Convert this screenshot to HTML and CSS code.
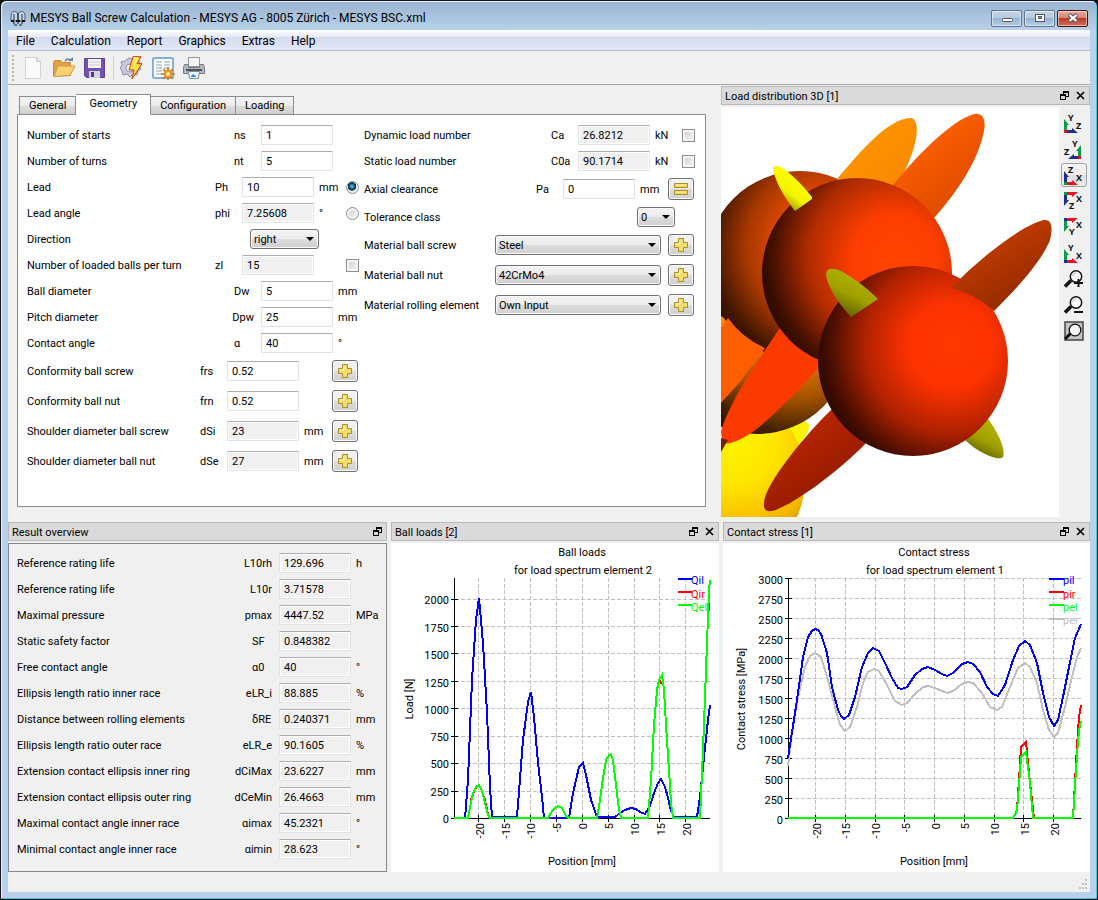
FILE: index.html
```html
<!DOCTYPE html>
<html lang="en">
<head>
    <meta charset="UTF-8">
    <meta name="viewport" content="width=device-width, initial-scale=1.0">
    <title>MESYS Ball Screw Calculation</title>
    <link rel="stylesheet" href="styles.css">
</head>
<body>

<svg class="defs" aria-hidden="true">
    <symbol id="plus" viewBox="0 0 16 16">
        <path d="M5.500 1.500h5v4h4v5h-4v4h-5v-4h-4v-5h4z" fill="#f3dc6c" stroke="#a98f25"/>
        <path d="M7 3v4H3" fill="none" stroke="#fff6bd"/>
    </symbol>
    <symbol id="equals" viewBox="0 0 16 16">
        <path d="M1.500 2.500h13v4h-13zM1.500 9.500h13v4h-13z" fill="#efd75f" stroke="#a98f25"/>
        <path d="M3 4h10M3 11h10" stroke="#fff2a5"/>
    </symbol>
    <symbol id="float" viewBox="0 0 9 9">
        <path d="M3 0h6v6H6v3H0V3h3zM4 2v1h2v2h2V2zM1 5v3h4V5z" fill="#000" fill-rule="evenodd"/>
    </symbol>
    <symbol id="cross" viewBox="0 0 9 9">
        <path d="M1 1l7 7M8 1L1 8" stroke="#000" stroke-width="1.600"/>
    </symbol>
    <symbol id="lens" viewBox="0 0 20 18">
        <path d="M1 16.500L7 10.500" stroke="#111" stroke-width="3.500"/>
        <circle cx="12" cy="6.500" r="5.700" fill="#f8f8f8" stroke="#111" stroke-width="1.500"/>
        <path d="M8.500 6a3.600 3.600 0 0 1 3.500-3" stroke="#bbb" fill="none"/>
    </symbol>
</svg>

<div class="window">
    <header class="titlebar">
        <svg class="app-icon" width="16" height="16" viewBox="0 0 16 16">
            <path d="M1 6a3.500 4.500 0 0 1 7 0v5H1zM8 6a3.500 4.500 0 0 1 7 0v5H8z" fill="#c7d5e6" stroke="#4c6078"/>
            <path d="M4 4v7M12 4v7M8 3v9" stroke="#22344c"/>
            <path d="M1 11h3M6 11h4M12 11h3" stroke="#111" stroke-width="2"/>
            <path d="M3 13h2M7 13h2M11 13h2M4 15h3M9 15h3" stroke="#555" stroke-width="1.500"/>
        </svg>
        <h1>MESYS Ball Screw Calculation - MESYS AG - 8005 Zürich - MESYS BSC.xml</h1>
        <div class="window-buttons">
            <button type="button" aria-label="Minimize">
                <svg width="12" height="12" viewBox="0 0 12 12"><rect x="1.500" y="6.500" width="10" height="3" rx="1" fill="#fff" stroke="#535666"/></svg>
            </button>
            <button type="button" aria-label="Maximize">
                <svg width="12" height="12" viewBox="0 0 12 12"><rect x="1.500" y="2.500" width="9" height="7" fill="#fff" stroke="#535666"/><rect x="4.500" y="4.500" width="3" height="2" fill="#8fb0cf" stroke="#535666"/></svg>
            </button>
            <button type="button" class="close" aria-label="Close">
                <svg width="12" height="12" viewBox="0 0 12 12"><path d="M2 2.500l8 7M10 2.500l-8 7" stroke="#535666" stroke-width="4"/><path d="M2.500 3l7 6M9.500 3l-7 6" stroke="#fff" stroke-width="2.200"/></svg>
            </button>
        </div>
    </header>

    <nav class="menubar">
        <a href="#">File</a>
        <a href="#">Calculation</a>
        <a href="#">Report</a>
        <a href="#">Graphics</a>
        <a href="#">Extras</a>
        <a href="#">Help</a>
    </nav>

    <div class="toolbar">
        <span class="handle"></span>
        <button type="button" aria-label="New">
            <svg width="24" height="24" viewBox="0 0 24 24"><path d="M4.500 1.500h11l4 4v17h-15z" fill="#fafafa" stroke="#d3d3d3"/><path d="M15.500 1.500v4h4" fill="#e8e8e8" stroke="#ccc"/></svg>
        </button>
        <button type="button" aria-label="Open">
            <svg width="24" height="24" viewBox="0 0 24 24">
                <path d="M1.500 20V6.500l1-2h6l2 2h8v13z" fill="#dda545" stroke="#c48a34"/>
                <path d="M2 20.500L6 10h17l-5 9.500z" fill="#f8cf72" stroke="#d79c3b"/>
                <path d="M13 5q3-4 6 0" fill="none" stroke="#6d8296" stroke-width="1.500"/><path d="M16 5h5V1z" fill="#6d8296"/>
            </svg>
        </button>
        <button type="button" aria-label="Save">
            <svg width="24" height="24" viewBox="0 0 24 24">
                <path d="M1.500 2.500h20v19h-18l-2-2z" fill="#7152ae" stroke="#5f429d"/>
                <path d="M5 3h13v9H5z" fill="#f2f2f4"/><path d="M6 6h11M6 9h11" stroke="#cacad2"/>
                <path d="M6 15h11v7H6z" fill="#d6d2e2"/><path d="M8 16h3v5H8z" fill="#54398c"/>
            </svg>
        </button>
        <span class="separator"></span>
        <button type="button" aria-label="Calculate">
            <svg width="24" height="24" viewBox="0 0 24 24">
                <path d="M9 2l3 1 3-1 2 3 3 1-1 4 2 3-3 2-1 4-4-1-3 3-3-3-4 1-1-4-2-3 2-3-1-3 4-1z" fill="#c9c9dc" stroke="#8c8ca8"/>
                <circle cx="10" cy="12" r="4" fill="#f2f2f6" stroke="#9292ac"/>
                <path d="M13 .700h8l-4 7h5L12 23l2-9H9z" fill="#ffdf3d" stroke="#c03a14"/>
                <path d="M14 2h4l-4 7" fill="none" stroke="#fff6b0"/>
            </svg>
        </button>
        <button type="button" aria-label="Report">
            <svg width="24" height="24" viewBox="0 0 24 24">
                <rect x="2" y="2" width="20" height="20" rx="1" fill="#fff" stroke="#5b9bd3" stroke-width="1.500"/>
                <path d="M5 6h6M5 9h6M5 12h6M5 15h6M5 18h6M13 6h6M13 9h6M13 12h6" stroke="#b4c0ca" stroke-width="1.500"/>
                <path d="M17 11l1 4 4-2-2 4 4 1-4 1 2 4-4-2-1 3-1-3-4 2 2-4-4-1 4-1-2-4 4 2z" fill="#f59c1f" stroke="#c66a12" stroke-width=".7"/>
                <circle cx="17" cy="18" r="2" fill="#ffe9a0"/>
            </svg>
        </button>
        <button type="button" aria-label="Print">
            <svg width="24" height="24" viewBox="0 0 24 24">
                <path d="M6.500 1.500h11v9h-11z" fill="#f4f4f4" stroke="#8f979e"/>
                <path d="M2.500 8.500h4v3h11v-3h4l1 3v6h-21v-6z" fill="#b2b8bd" stroke="#747b81"/>
                <path d="M4 14h16" stroke="#4c5257" stroke-width="2"/>
                <path d="M6.500 15.500h11l-1 7h-9z" fill="#eaf4fc" stroke="#7c8fa0"/>
                <path d="M9 20l2-2 3 2v1H9z" fill="#3f8fd6"/>
            </svg>
        </button>
    </div>

    <main class="workspace">
        <section class="top-row">
            <div class="editor">
                <div class="tabs" role="tablist">
                    <button type="button" role="tab">General</button>
                    <button type="button" role="tab" class="active" aria-selected="true">Geometry</button>
                    <button type="button" role="tab">Configuration</button>
                    <button type="button" role="tab">Loading</button>
                </div>
                <form class="panel">
                    <div class="column">
                        <div class="row"><label for="ns">Number of starts</label><span class="symbol">ns</span><input type="text" id="ns" value="1"><span class="unit"></span></div>
                        <div class="row"><label for="nt">Number of turns</label><span class="symbol">nt</span><input type="text" id="nt" value="5"><span class="unit"></span></div>
                        <div class="row"><label for="ph">Lead</label><span class="symbol">Ph</span><input type="text" id="ph" value="10"><span class="unit">mm</span><span class="tail"><input type="radio" name="clearance" id="axial" checked></span></div>
                        <div class="row"><label for="phi">Lead angle</label><span class="symbol">phi</span><input type="text" id="phi" value="7.25608" readonly><span class="unit">°</span><span class="tail"><input type="radio" name="clearance" id="tolerance"></span></div>
                        <div class="row direction"><label for="direction">Direction</label><span class="select"><select id="direction"><option>right</option><option>left</option></select></span></div>
                        <div class="row"><label for="zl">Number of loaded balls per turn</label><span class="symbol">zl</span><input type="text" id="zl" value="15" readonly><span class="unit"></span><span class="tail"><input type="checkbox" aria-label="Override number of loaded balls"></span></div>
                        <div class="row"><label for="dw">Ball diameter</label><span class="symbol">Dw</span><input type="text" id="dw" value="5"><span class="unit">mm</span></div>
                        <div class="row"><label for="dpw">Pitch diameter</label><span class="symbol">Dpw</span><input type="text" id="dpw" value="25"><span class="unit">mm</span></div>
                        <div class="row"><label for="alpha">Contact angle</label><span class="symbol">α</span><input type="text" id="alpha" value="40"><span class="unit">°</span></div>
                        <div class="row tall"><label for="frs">Conformity ball screw</label><span class="symbol">frs</span><input type="text" id="frs" value="0.52"><span class="unit"></span><button type="button" class="tool" aria-label="Edit"><svg width="16" height="16"><use href="#plus"/></svg></button></div>
                        <div class="row tall"><label for="frn">Conformity ball nut</label><span class="symbol">frn</span><input type="text" id="frn" value="0.52"><span class="unit"></span><button type="button" class="tool" aria-label="Edit"><svg width="16" height="16"><use href="#plus"/></svg></button></div>
                        <div class="row tall"><label for="dsi">Shoulder diameter ball screw</label><span class="symbol">dSi</span><input type="text" id="dsi" value="23" readonly><span class="unit">mm</span><button type="button" class="tool" aria-label="Edit"><svg width="16" height="16"><use href="#plus"/></svg></button></div>
                        <div class="row tall"><label for="dse">Shoulder diameter ball nut</label><span class="symbol">dSe</span><input type="text" id="dse" value="27" readonly><span class="unit">mm</span><button type="button" class="tool" aria-label="Edit"><svg width="16" height="16"><use href="#plus"/></svg></button></div>
                    </div>
                    <div class="column">
                        <div class="row"><label for="ca">Dynamic load number</label><span class="symbol">Ca</span><input type="text" id="ca" value="26.8212" readonly><span class="unit">kN</span><span class="tail"><input type="checkbox" aria-label="Override dynamic load number"></span></div>
                        <div class="row"><label for="c0a">Static load number</label><span class="symbol">C0a</span><input type="text" id="c0a" value="90.1714" readonly><span class="unit">kN</span><span class="tail"><input type="checkbox" aria-label="Override static load number"></span></div>
                        <div class="row tall"><label for="axial">Axial clearance</label><span class="symbol">Pa</span><input type="text" id="pa" value="0" aria-label="Pa"><span class="unit">mm</span><button type="button" class="tool" aria-label="Calculate clearance"><svg width="16" height="16"><use href="#equals"/></svg></button></div>
                        <div class="row class-row"><label for="tolerance">Tolerance class</label><span class="select"><select id="class" aria-label="Tolerance class"><option>0</option><option>1</option></select></span></div>
                        <div class="row tall material"><label for="mat-screw">Material ball screw</label><span class="select"><select id="mat-screw"><option>Steel</option></select></span><button type="button" class="tool" aria-label="Edit"><svg width="16" height="16"><use href="#plus"/></svg></button></div>
                        <div class="row tall material"><label for="mat-nut">Material ball nut</label><span class="select"><select id="mat-nut"><option>42CrMo4</option></select></span><button type="button" class="tool" aria-label="Edit"><svg width="16" height="16"><use href="#plus"/></svg></button></div>
                        <div class="row tall material"><label for="mat-ball">Material rolling element</label><span class="select"><select id="mat-ball"><option>Own Input</option></select></span><button type="button" class="tool" aria-label="Edit"><svg width="16" height="16"><use href="#plus"/></svg></button></div>
                    </div>
                </form>
            </div>

            <div class="dock">
                <div class="dock-title">
                    <h2>Load distribution 3D [1]</h2>
                    <button type="button" aria-label="Float"><svg width="9" height="9"><use href="#float"/></svg></button>
                    <button type="button" aria-label="Close"><svg width="9" height="9"><use href="#cross"/></svg></button>
                </div>
                <div class="view3d">
                    <svg class="scene" viewBox="721 107 338 410">
                        <defs>
                            <radialGradient id="ball-front" cx=".7" cy=".42" r=".76">
                                <stop offset="0" stop-color="#ff3800"/><stop offset=".3" stop-color="#fc3200"/><stop offset=".6" stop-color="#b02200"/><stop offset=".84" stop-color="#480e00"/><stop offset=".92" stop-color="#300900"/>
                            </radialGradient>
                            <radialGradient id="ball-mid" cx=".7" cy=".42" r=".76">
                                <stop offset="0" stop-color="#ff4400"/><stop offset=".3" stop-color="#fc3e00"/><stop offset=".6" stop-color="#b02c00"/><stop offset=".84" stop-color="#481100"/><stop offset=".92" stop-color="#300b00"/>
                            </radialGradient>
                            <radialGradient id="ball-back" cx=".66" cy=".4" r=".74">
                                <stop offset="0" stop-color="#ff5800"/><stop offset=".3" stop-color="#f45000"/><stop offset=".6" stop-color="#a83800"/><stop offset=".85" stop-color="#401600"/><stop offset="1" stop-color="#2c0e00"/>
                            </radialGradient>
                            <radialGradient id="ball-low" cx=".7" cy=".4" r=".7">
                                <stop offset="0" stop-color="#ff8800"/><stop offset=".35" stop-color="#e07400"/><stop offset=".6" stop-color="#a05000"/><stop offset=".85" stop-color="#402000"/><stop offset="1" stop-color="#2a1400"/>
                            </radialGradient>
                            <radialGradient id="ball-yellow" cx=".62" cy=".3" r=".78">
                                <stop offset="0" stop-color="#fff400"/><stop offset=".3" stop-color="#ffe400"/><stop offset=".6" stop-color="#f6b800"/><stop offset=".85" stop-color="#a87800"/><stop offset="1" stop-color="#604400"/>
                            </radialGradient>
                            <linearGradient id="spike-orange" x1="0" y1="0" x2="1" y2="1"><stop offset="0" stop-color="#ff9a00"/><stop offset="1" stop-color="#f88600"/></linearGradient>
                            <linearGradient id="spike-top" x1=".3" y1=".2" x2=".7" y2=".8"><stop offset="0" stop-color="#ff6000"/><stop offset="1" stop-color="#e04c00"/></linearGradient>
                            <linearGradient id="spike-right" x1=".3" y1=".2" x2=".7" y2=".8"><stop offset="0" stop-color="#c43c00"/><stop offset="1" stop-color="#982c00"/></linearGradient>
                            <linearGradient id="spike-low" x1=".3" y1=".2" x2=".7" y2=".8"><stop offset="0" stop-color="#b82600"/><stop offset="1" stop-color="#941a00"/></linearGradient>
                            <linearGradient id="spike-olive" x1=".6" y1="0" x2=".2" y2=".8"><stop offset="0" stop-color="#b4b400"/><stop offset=".6" stop-color="#a0a000"/><stop offset="1" stop-color="#6c6c00"/></linearGradient>
                            <linearGradient id="spike-yellow" x1=".7" y1="0" x2=".2" y2=".8"><stop offset="0" stop-color="#ffff00"/><stop offset=".7" stop-color="#f4f400"/><stop offset="1" stop-color="#a0a000"/></linearGradient>
                        </defs>
                        <rect x="721" y="107" width="338" height="410" fill="#fff"/>
                        <path d="M785 428C794 421 806 419 809 425C810 431 804 438 798 446z" fill="#f8f400"/>
                        <circle cx="711" cy="479" r="94" fill="url(#ball-yellow)"/>
                        <circle cx="757" cy="340" r="94" fill="url(#ball-low)"/>
                        <circle cx="800" cy="265" r="94" fill="url(#ball-back)"/>
                        <path d="M721 316l3 2 4 6-7 8z" fill="#ff8a00"/>
                        <path d="M728 318Q742 338 765 348L740 382 721 403V328z" fill="#ff5e00"/>
                        <path d="M837 179C862 149 890 117 912 118C922 123 916 152 898 184L890 192z" fill="url(#spike-orange)"/>
                        <path d="M893 185C915 158 950 121 974 114C984 112 986 122 984 131C978 163 953 197 934 218z" fill="url(#spike-top)"/>
                        <path d="M780 328C762 354 728 404 721 432L723 443C730 446 750 436 765 422C785 404 806 383 818 368L830 350z" fill="#fb3a00"/>
                        <path d="M721 438l7 2-7 12z" fill="#6c2600"/>
                        <circle cx="857" cy="273" r="95" fill="url(#ball-mid)"/>
                        <path d="M832 409C808 432 765 483 764 503C763 512 769 513 778 509C808 496 850 460 866 443z" fill="url(#spike-low)"/>
                        <path d="M988 419C998 432 1006 450 1003 457C999 461 981 455 965 440z" fill="url(#spike-olive)"/>
                        <circle cx="913" cy="361" r="95" fill="url(#ball-front)"/>
                        <path d="M951 288C980 258 1020 226 1044 220C1052 219 1053 228 1050 240C1041 263 1014 291 994 311Q977 295 951 288z" fill="url(#spike-right)"/>
                        <path d="M773 168C774 164 781 166 788 172Q801 183 812 197V199L795 211Q776 187 773 168z" fill="url(#spike-yellow)"/>
                        <path d="M826 275C826 268 832 267 841 271Q861 282 878 299L851 317Q829 293 826 275z" fill="url(#spike-olive)"/>
                    </svg>
                    <div class="view-tools">
                        <button type="button" aria-label="View YZ"><svg width="22" height="22" viewBox="0 -3 22 22"><path class="g" d="M1 4v11h3v-5h2z"/><path class="b" d="M4 18v-3h5v-2l6 5z"/><path class="r" d="M1 15h3v3H1z"/><text x="5" y="6">Y</text><text x="13" y="14">Z</text></svg></button>
                        <button type="button" aria-label="View YZ mirrored"><svg width="22" height="22" viewBox="0 -3 22 22"><path class="g" d="M18 4v11h-3v-5h-2z"/><path class="b" d="M15 18v-3h-4v-2l-6 5z"/><path class="r" d="M15 15h3v3h-3z"/><text x="9" y="6">Y</text><text x="1" y="14">Z</text></svg></button>
                        <button type="button" class="pressed" aria-label="View ZX"><svg width="22" height="22" viewBox="0 -3 22 22"><path class="b" d="M1 4v11h3v-5h2z"/><path class="r" d="M4 18v-3h5v-2l6 5z"/><path class="g" d="M1 15h3v3H1z"/><text x="5" y="6">Z</text><text x="13" y="14">X</text></svg></button>
                        <button type="button" aria-label="View ZX flipped"><svg width="22" height="22" viewBox="0 -2 22 22"><path class="b" d="M1 14V3h3v5h2z"/><path class="r" d="M4 0v3h5v2l6-5z"/><path class="g" d="M1 0h3v3H1z"/><text x="13" y="10">X</text><text x="6" y="17">Z</text></svg></button>
                        <button type="button" aria-label="View XY flipped"><svg width="22" height="22" viewBox="0 -2 22 22"><path class="g" d="M1 14V3h3v5h2z"/><path class="r" d="M4 0v3h5v2l6-5z"/><path class="b" d="M1 0h3v3H1z"/><text x="13" y="10">X</text><text x="6" y="17">Y</text></svg></button>
                        <button type="button" aria-label="View XY"><svg width="22" height="22" viewBox="0 -3 22 22"><path class="g" d="M1 4v11h3v-5h2z"/><path class="r" d="M4 18v-3h5v-2l6 5z"/><path class="b" d="M1 15h3v3H1z"/><text x="5" y="6">Y</text><text x="13" y="14">X</text></svg></button>
                        <button type="button" aria-label="Zoom in"><svg width="20" height="18" viewBox="0 0 20 18"><use href="#lens"/><path d="M10 13h9M14.500 9v8" stroke="#111" stroke-width="2"/></svg></button>
                        <button type="button" aria-label="Zoom out"><svg width="20" height="18" viewBox="0 0 20 18"><use href="#lens"/><path d="M10 16h9" stroke="#111" stroke-width="2"/></svg></button>
                        <button type="button" aria-label="Fit view"><svg width="20" height="20" viewBox="0 0 20 20"><rect x="1" y="1" width="18" height="18" fill="#c4c4c4" stroke="#444" stroke-width="1.500"/><path d="M1 18l6-6" stroke="#111" stroke-width="3"/><circle cx="11" cy="9" r="5.800" fill="#fafafa" stroke="#111" stroke-width="1.300"/></svg></button>
                    </div>
                </div>
            </div>
        </section>

        <section class="bottom-row">
            <div class="dock">
                <div class="dock-title">
                    <h2>Result overview</h2>
                    <button type="button" aria-label="Float"><svg width="9" height="9"><use href="#float"/></svg></button>
                </div>
                <div class="results">
                    <div class="row"><label for="l10rh">Reference rating life</label><span class="symbol">L10rh</span><input type="text" id="l10rh" value="129.696" readonly><span class="unit">h</span></div>
                    <div class="row"><label for="l10r">Reference rating life</label><span class="symbol">L10r</span><input type="text" id="l10r" value="3.71578" readonly><span class="unit"></span></div>
                    <div class="row"><label for="pmax">Maximal pressure</label><span class="symbol">pmax</span><input type="text" id="pmax" value="4447.52" readonly><span class="unit">MPa</span></div>
                    <div class="row"><label for="sf">Static safety factor</label><span class="symbol">SF</span><input type="text" id="sf" value="0.848382" readonly><span class="unit"></span></div>
                    <div class="row"><label for="a0">Free contact angle</label><span class="symbol">α0</span><input type="text" id="a0" value="40" readonly><span class="unit">°</span></div>
                    <div class="row"><label for="elri">Ellipsis length ratio inner race</label><span class="symbol">eLR_i</span><input type="text" id="elri" value="88.885" readonly><span class="unit">%</span></div>
                    <div class="row"><label for="dre">Distance between rolling elements</label><span class="symbol">δRE</span><input type="text" id="dre" value="0.240371" readonly><span class="unit">mm</span></div>
                    <div class="row"><label for="elre">Ellipsis length ratio outer race</label><span class="symbol">eLR_e</span><input type="text" id="elre" value="90.1605" readonly><span class="unit">%</span></div>
                    <div class="row"><label for="dcimax">Extension contact ellipsis inner ring</label><span class="symbol">dCiMax</span><input type="text" id="dcimax" value="23.6227" readonly><span class="unit">mm</span></div>
                    <div class="row"><label for="dcemin">Extension contact ellipsis outer ring</label><span class="symbol">dCeMin</span><input type="text" id="dcemin" value="26.4663" readonly><span class="unit">mm</span></div>
                    <div class="row"><label for="aimax">Maximal contact angle inner race</label><span class="symbol">αimax</span><input type="text" id="aimax" value="45.2321" readonly><span class="unit">°</span></div>
                    <div class="row"><label for="aimin">Minimal contact angle inner race</label><span class="symbol">αimin</span><input type="text" id="aimin" value="28.623" readonly><span class="unit">°</span></div>
                </div>
            </div>

            <div class="dock">
                <div class="dock-title">
                    <h2>Ball loads [2]</h2>
                    <button type="button" aria-label="Float"><svg width="9" height="9"><use href="#float"/></svg></button>
                    <button type="button" aria-label="Close"><svg width="9" height="9"><use href="#cross"/></svg></button>
                </div>
                <svg class="chart" viewBox="391 543 328 329">
                    <g class="middle"><text x="582" y="556">Ball loads</text><text x="583" y="574">for load spectrum element 2</text><text x="582" y="865">Position [mm]</text><text transform="translate(413 699) rotate(-90)">Load [N]</text></g>
                    <path class="grid" d="M455 791.500h255M455 763.500h255M455 736.500h255M455 708.500h255M455 681.500h255M455 653.500h255M455 626.500h255M455 599.500h255M478.500 578v240M504.500 578v240M530.500 578v240M556.500 578v240M582.500 578v240M608.500 578v240M634.500 578v240M659.500 578v240M685.500 578v240"/>
                    <path class="axis" d="M454.500 578v240M454 818.500h256M451 818.500h7M451 791.500h7M451 763.500h7M451 736.500h7M451 708.500h7M451 681.500h7M451 653.500h7M451 626.500h7M451 599.500h7M478.500 815v7M504.500 815v7M530.500 815v7M556.500 815v7M582.500 815v7M608.500 815v7M634.500 815v7M659.500 815v7M685.500 815v7"/>
                    <g class="end">
                        <text x="449" y="823">0</text><text x="449" y="796">250</text><text x="449" y="768">500</text><text x="449" y="741">750</text><text x="449" y="714">1000</text><text x="449" y="687">1250</text><text x="449" y="659">1500</text><text x="449" y="632">1750</text><text x="449" y="604">2000</text>
                        <text transform="translate(484 823) rotate(-90)">-20</text><text transform="translate(510 823) rotate(-90)">-15</text><text transform="translate(535 823) rotate(-90)">-10</text><text transform="translate(561 823) rotate(-90)">-5</text><text transform="translate(587 823) rotate(-90)">0</text><text transform="translate(613 823) rotate(-90)">5</text><text transform="translate(639 823) rotate(-90)">10</text><text transform="translate(665 823) rotate(-90)">15</text><text transform="translate(691 823) rotate(-90)">20</text>
                    </g>
                    <path class="line blue" d="M454 818H465L468 780 470 730 472 680 476 620 479 598 483 643 487 713 490 787 492 817H517L523 740 528 702 531 692 534 717 538 763 542 797 544 818H569L573 793 579 767 583 763 586 775 591 800 597 817H615L620 813 625 810 631 808 636 809 640 812 645 814 650 806 654 793 658 783 661 779 665 787 668 798 671 811 674 817H697L700 797 704 757 708 720 710 705"/>
                    <path class="line red" d="M471 800L474 791 477 786M484 796L488 814M659 680L662 684M708 625L709 598"/>
                    <path class="line green" d="M454 818H468L471 802 473 793 476 787 479 785 482 791 485 803 488 815 490 818H548L552 811 555 808 558 806 562 808 566 816 569 818H597L600 800 603 778 606 760 609 755 611 754 613 761 616 785 619 810 621 818H648L651 780 654 725 657 690 659 680 662 675 664 690 666 725 669 770 671 803 673 818H700L703 750 706 670 709 590 710 580"/>
                    <path class="line blue" d="M678 579h14"/><path class="line red" d="M678 592h14"/><path class="line green" d="M678 605h14"/>
                    <text class="blue" x="691" y="584">Qil</text><text class="red" x="691" y="598">Qir</text><text class="green" x="691" y="611">Qel</text>
                </svg>
            </div>

            <div class="dock">
                <div class="dock-title">
                    <h2>Contact stress [1]</h2>
                    <button type="button" aria-label="Float"><svg width="9" height="9"><use href="#float"/></svg></button>
                    <button type="button" aria-label="Close"><svg width="9" height="9"><use href="#cross"/></svg></button>
                </div>
                <svg class="chart" viewBox="723 543 367 329">
                    <g class="middle"><text x="934" y="556">Contact stress</text><text x="935" y="574">for load spectrum element 1</text><text x="934" y="865">Position [mm]</text><text transform="translate(745 699) rotate(-90)">Contact stress [MPa]</text></g>
                    <path class="grid" d="M789 798.500h292M789 778.500h292M789 758.500h292M789 738.500h292M789 718.500h292M789 698.500h292M789 678.500h292M789 658.500h292M789 638.500h292M789 618.500h292M789 598.500h292M789 578.500h292M815.500 578v240M845.500 578v240M875.500 578v240M904.500 578v240M934.500 578v240M964.500 578v240M994.500 578v240M1023.500 578v240M1053.500 578v240"/>
                    <path class="axis" d="M788.500 578v240M788 818.500h293M785 818.500h7M785 798.500h7M785 778.500h7M785 758.500h7M785 738.500h7M785 718.500h7M785 698.500h7M785 678.500h7M785 658.500h7M785 638.500h7M785 618.500h7M785 598.500h7M785 578.500h7M815.500 815v7M845.500 815v7M875.500 815v7M904.500 815v7M934.500 815v7M964.500 815v7M994.500 815v7M1023.500 815v7M1053.500 815v7"/>
                    <g class="end">
                        <text x="783" y="824">0</text><text x="783" y="804">250</text><text x="783" y="784">500</text><text x="783" y="764">750</text><text x="783" y="744">1000</text><text x="783" y="724">1250</text><text x="783" y="704">1500</text><text x="783" y="684">1750</text><text x="783" y="664">2000</text><text x="783" y="644">2250</text><text x="783" y="624">2500</text><text x="783" y="604">2750</text><text x="783" y="584">3000</text>
                        <text transform="translate(821 823) rotate(-90)">-20</text><text transform="translate(850 823) rotate(-90)">-15</text><text transform="translate(880 823) rotate(-90)">-10</text><text transform="translate(910 823) rotate(-90)">-5</text><text transform="translate(940 823) rotate(-90)">0</text><text transform="translate(969 823) rotate(-90)">5</text><text transform="translate(999 823) rotate(-90)">10</text><text transform="translate(1029 823) rotate(-90)">15</text><text transform="translate(1059 823) rotate(-90)">20</text>
                    </g>
                    <path class="line gray" d="M788 766L792 733 798 697 805 667 810 656 815 653 821 657 828 680 835 707 840 725 845 731 850 727 857 707 863 683 868 672 874 669 879 671 887 685 895 701 902 705 907 703 915 694 923 687 928 686 935 688 947 693 953 691 962 684 968 682 973 683 982 693 990 707 997 710 1002 707 1010 687 1018 668 1025 663 1030 667 1037 683 1043 710 1049 730 1054 737 1058 733 1065 707 1072 677 1077 657 1081 648"/>
                    <path class="line blue" d="M788 758L797 700 803 657 808 637 812 631 815 629 818 630 821 634 827 653 832 687 838 710 841 716 844 719 849 715 855 697 862 667 868 653 873 648 879 651 885 663 892 678 898 688 902 689 907 687 915 675 922 669 928 667 935 670 942 674 947 676 953 673 962 664 968 662 973 664 980 672 987 687 993 694 998 696 1005 685 1013 660 1019 646 1025 641 1030 645 1037 663 1043 693 1049 717 1054 726 1058 720 1063 697 1069 667 1075 638 1081 624"/>
                    <path class="line red" d="M788 818H1013L1017 810 1019 780 1021 747 1026 742 1030 783 1034 818H1073L1077 747 1079 717 1081 705"/>
                    <path class="line green" d="M788 818H1013L1017 811 1019 785 1021 757 1026 752 1030 783 1033 818H1073L1077 755 1079 730 1081 721"/>
                    <path class="line blue" d="M1049 579h15"/><path class="line red" d="M1049 592h15"/><path class="line green" d="M1049 605h15"/><path class="line gray" d="M1049 619h15"/>
                    <text class="blue" x="1063" y="584">pil</text><text class="red" x="1063" y="598">pir</text><text class="green" x="1063" y="611">pel</text><text class="gray" x="1063" y="624">per</text>
                </svg>
            </div>
        </section>
    </main>

    <footer class="statusbar">
        <svg width="10" height="10" viewBox="0 0 10 10"><path d="M7 0h2v2H7zM4 4h2v2H4zM7 4h2v2H7zM1 8h2v2H1zM4 8h2v2H4zM7 8h2v2H7z" fill="#c0c0c0"/></svg>
    </footer>
</div>

</body>
</html>
```
FILE: styles.css
```css
* {
    box-sizing: border-box;
}

body {
    margin: 0;
    background: #111;
    color: #000;
    font-family: Roboto, sans-serif;
    font-size: 11px;
    line-height: 14px;
}

button, input, select {
    font: inherit;
    color: inherit;
    margin: 0;
}

button {
    padding: 0;
    display: flex;
    align-items: center;
    justify-content: center;
    border: none;
    background: none;
}

h1, h2 {
    margin: 0;
    font-weight: normal;
}

.defs {
    display: none;
}

.window {
    min-height: 100vh;
    display: flex;
    flex-direction: column;
    padding: 0 7px 7px;
    border: 1px solid #15181c;
    border-bottom-color: #000;
    border-radius: 6px 6px 0 0;
    background: linear-gradient(#99b4d1, #b9d1ea 30px, #b9d1ea);
    box-shadow: inset -1px -1px #42c6e0, inset 1px 1px #e8f1fa;
}

/* Title bar */
.titlebar {
    display: flex;
    height: 29px;
    align-items: center;
    padding: 5px 2px 0;
}

.titlebar h1 {
    flex: 1;
    margin-left: 4px;
    font-size: 12px;
    line-height: 16px;
}

.window-buttons {
    display: flex;
    gap: 2px;
}

.window-buttons button {
    width: 31px;
    height: 17px;
    border: 1px solid #5f7389;
    border-radius: 2px;
    background: linear-gradient(#c4d5e7, #b4cade 45%, #98b3ce 50%, #b5cde4);
    box-shadow: inset 0 0 0 1px rgba(255, 255, 255, 0.5);
}

.window-buttons .close {
    border-color: #4a1018;
    background: linear-gradient(#e8a99c, #d98375 45%, #bd3b24 50%, #d0705a);
}

/* Menu and toolbar */
.menubar {
    display: flex;
    height: 21px;
    border-bottom: 1px solid #b6bccc;
    background: linear-gradient(#fff, #e7ebf5 33%, #d5daee 34%, #e1e6f6);
}

.menubar a {
    padding: 1px 8px 0;
    color: #000;
    font-size: 12px;
    line-height: 20px;
    text-decoration: none;
}

.toolbar {
    display: flex;
    align-items: center;
    gap: 1px;
    height: 34px;
    padding-left: 4px;
    border-bottom: 1px solid #a5a5a5;
    background: #f0f0f0;
}

.toolbar button {
    width: 30px;
    height: 28px;
}

.handle {
    width: 2px;
    height: 26px;
    margin-right: 3px;
    background: repeating-linear-gradient(#b5b5b5 0 2px, transparent 2px 4px);
}

.separator {
    width: 1px;
    height: 24px;
    margin: 0 2px;
    background: #d0d0d0;
}

/* Layout */
.workspace {
    flex: 1;
    display: flex;
    flex-direction: column;
    gap: 5px;
    padding-top: 1px;
    background: #f0f0f0;
}

.top-row {
    flex: 1;
    display: grid;
    grid-template-columns: 711fr 369fr;
    gap: 2px;
}

.bottom-row {
    display: grid;
    grid-template-columns: 379fr 328fr 367fr;
    gap: 4px;
}

.editor {
    display: flex;
    flex-direction: column;
    padding: 8px 13px 10px 9px;
}

/* Tabs */
.tabs {
    display: flex;
    align-items: flex-end;
    height: 21px;
    margin-bottom: -1px;
    padding-left: 2px;
    z-index: 1;
}

.tabs button {
    height: 19px;
    padding: 0 9px;
    border: 1px solid #898c95;
    border-left-width: 0;
    background: linear-gradient(#f3f3f3, #ebebeb 50%, #dcdcdc 55%, #cfcfcf);
}

.tabs button:first-child {
    border-left-width: 1px;
}

.tabs .active {
    height: 21px;
    padding: 0 13px 2px;
    border-bottom-color: #fff;
    background: #fff;
}

.panel {
    flex: 1;
    display: grid;
    grid-template-columns: 332fr 331fr;
    gap: 5px;
    padding: 7px 10px 7px 9px;
    border: 1px solid #898c95;
    background: #fff;
}

/* Form rows */
.row {
    display: flex;
    align-items: center;
    height: 26px;
}

.row.tall {
    height: 30px;
}

.row label, .symbol, .unit {
    padding-top: 2px;
}

.row label {
    flex: 1;
    white-space: nowrap;
}

.symbol {
    min-width: 20px;
    margin-right: 7px;
}

.unit {
    width: 21px;
    margin-left: 5px;
}

.tail {
    display: flex;
    justify-content: flex-end;
    width: 19px;
}

input[type="text"] {
    width: 72px;
    height: 20px;
    padding: 1px 4px 0;
    border: 1px solid #e2e3ea;
    border-top-color: #abadb3;
    border-radius: 1px;
    background: #fff;
}

input[readonly] {
    background: #f0f0f0;
    box-shadow: inset 0 0 0 1px #fff;
}

input[type="checkbox"], input[type="radio"] {
    appearance: none;
    width: 13px;
    height: 13px;
    border: 1px solid #8e8f8f;
    background: linear-gradient(135deg, #c9ced6, #f6f6f6);
    box-shadow: inset 0 0 0 2px #f4f4f4;
}

input[type="radio"] {
    border-radius: 50%;
}

input[type="radio"]:checked {
    background: radial-gradient(circle at 45% 40%, #6fd0f5, #14506f 30%, #0c2f47 45%, #e8ecf0 50%);
    box-shadow: none;
}

.tool {
    width: 26px;
    height: 22px;
    margin: 0 1px 0 7px;
}

.tool, .select select {
    border: 1px solid #707070;
    border-radius: 3px;
    background: linear-gradient(#f3f3f3, #ebebeb 49%, #dddddd 51%, #cfcfcf);
    box-shadow: inset 0 0 0 1px #fafafa;
}

.select {
    position: relative;
    width: 166px;
}

.select select {
    appearance: none;
    display: block;
    width: 100%;
    height: 20px;
    padding: 1px 3px 0;
}

.select::after {
    content: "";
    position: absolute;
    top: 8px;
    right: 5px;
    border: 4px solid transparent;
    border-top-color: #000;
    border-bottom-width: 0;
    pointer-events: none;
}

.direction .select {
    width: 69px;
    margin-right: 40px;
}

.class-row .select {
    width: 38px;
    margin-right: 20px;
}

/* Docks */
.dock {
    display: flex;
    flex-direction: column;
    gap: 2px;
    min-width: 0;
}

.dock-title {
    display: flex;
    align-items: center;
    gap: 7px;
    height: 19px;
    padding: 0 4px 0 3px;
    border: 1px solid #b9b9b9;
    background: #dadada;
}

.dock-title h2 {
    flex: 1;
    padding-top: 2px;
    font-size: 11px;
}

.view3d {
    flex: 1;
    display: flex;
}

.scene {
    flex: 1;
    min-width: 0;
    align-self: flex-start;
}

.view-tools {
    display: flex;
    flex-direction: column;
    gap: 2px;
    width: 31px;
    padding: 4px 3px 0 2px;
}

.view-tools button {
    height: 24px;
    border: 1px solid transparent;
    border-radius: 3px;
}

.view-tools .pressed {
    border-color: #a0a0a0;
    background: linear-gradient(#f4f4f4, #ececec 50%, #dedede 52%, #ececec);
}

.view-tools text {
    font: bold 9px "Open Sans", sans-serif;
    fill: #111;
}

.r { fill: #e8102a; }
.g { fill: #0b9a46; }
.b { fill: #1c2f8c; }

.results {
    flex: 1;
    padding: 6px 9px 9px 8px;
    border: 1px solid #828790;
}

/* Charts */
.chart {
    display: block;
    width: 100%;
    background: #fff;
}

.middle { text-anchor: middle; }
.end { text-anchor: end; }

.grid, .axis, .line {
    fill: none;
    shape-rendering: crispEdges;
}

.grid {
    stroke: #c0c0c0;
    stroke-dasharray: 4 2;
}

.axis { stroke: #000; }
.line { stroke-width: 2; }

.line.blue { stroke: #0000ff; }
.line.red { stroke: #ff0000; }
.line.green { stroke: #00ff00; }
.line.gray { stroke: #c0c0c0; }

text.blue { fill: #0000ff; }
text.red { fill: #ff0000; }
text.green { fill: #00ff00; }
text.gray { fill: #c0c0c0; }

.statusbar {
    display: flex;
    justify-content: flex-end;
    align-items: flex-end;
    height: 20px;
    padding: 0 2px 3px 0;
    background: #f0f0f0;
}
```
